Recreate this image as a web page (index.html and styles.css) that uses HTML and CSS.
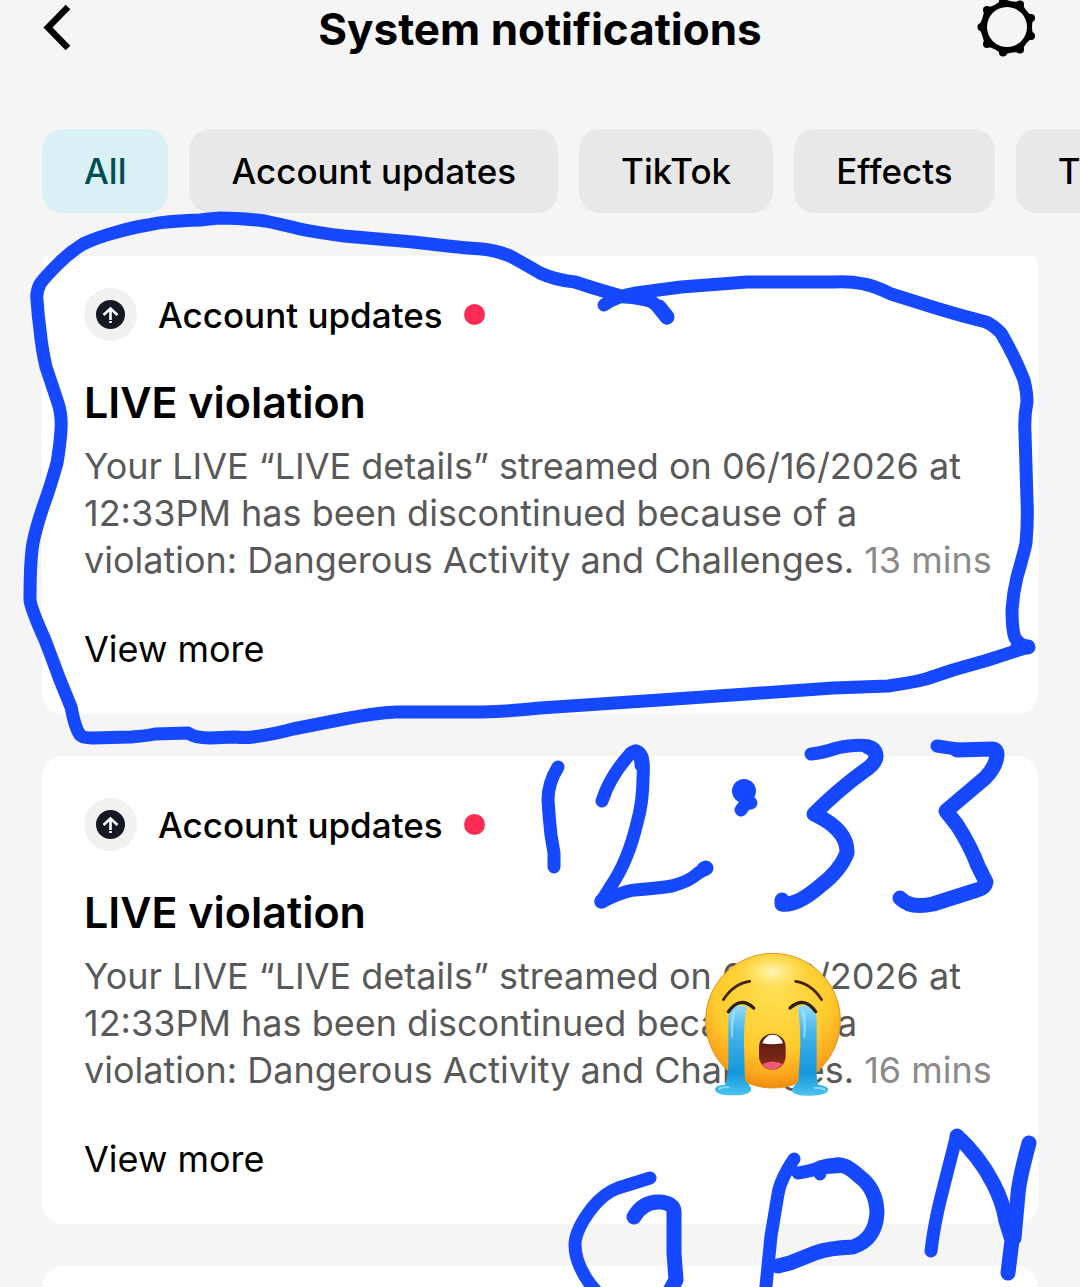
FILE: index.html
```html
<!DOCTYPE html>
<html lang="en">
<head>
    <meta charset="UTF-8">
    <meta name="viewport" content="width=device-width, initial-scale=1">
    <title>System notifications</title>
    <link rel="stylesheet" href="styles.css">
</head>
<body>
    <div class="app">
        <header class="header">
            <button class="icon-btn" aria-label="Back">
                <svg width="32" height="56" viewBox="0 0 32 56"><path d="M25 8 L5 28.500 L25 49" fill="none" stroke="#000" stroke-width="6.500"/></svg>
            </button>
            <h1>System notifications</h1>
            <button class="icon-btn settings" aria-label="Settings">
                <svg width="60" height="60" viewBox="0 0 60 60">
                    <path d="M4 30 Q8 24 10 13 Q21 11 26 4 Q33 8 43 7 Q46 16 54 21 Q51 30 54 39 Q46 44 43 53 Q33 52 26 56 Q21 49 10 47 Q8 36 4 30 Z" fill="#000" stroke="#000" stroke-width="5" stroke-linejoin="round"/>
                    <g fill="#000">
                        <circle cx="4.500" cy="30" r="4"/>
                        <circle cx="10" cy="13" r="4"/>
                        <circle cx="26" cy="4.500" r="4"/>
                        <circle cx="43" cy="7.500" r="4"/>
                        <circle cx="54" cy="21" r="4"/>
                        <circle cx="54" cy="39" r="4"/>
                        <circle cx="43" cy="52.500" r="4"/>
                        <circle cx="26" cy="55.500" r="4"/>
                        <circle cx="10" cy="47" r="4"/>
                    </g>
                    <circle cx="30" cy="30" r="20" fill="#f5f5f5"/>
                </svg>
            </button>
        </header>

        <nav class="chips">
            <button class="chip active">All</button>
            <button class="chip">Account updates</button>
            <button class="chip">TikTok</button>
            <button class="chip">Effects</button>
            <button class="chip">Transactions</button>
        </nav>

        <main class="feed">
            <article class="card">
                <div class="card-top">
                    <span class="avatar">
                        <svg width="53" height="53" viewBox="0 0 53 53"><circle cx="26.500" cy="26.500" r="14.500" fill="#161823"/><path d="M19.500 27 L26.500 20.500 L33.500 27 M26.500 21 V32 M26.500 33 V35" fill="none" stroke="#fff" stroke-width="2.600"/></svg>
                    </span>
                    <span class="category">Account updates</span>
                    <span class="dot"></span>
                </div>
                <h2>LIVE violation</h2>
                <p>Your LIVE “LIVE details” streamed on 06/16/2026 at<br>12:33PM has been discontinued because of a<br>violation: Dangerous Activity and Challenges. <time>13 mins</time></p>
                <a class="more" href="#">View more</a>
            </article>

            <article class="card">
                <div class="card-top">
                    <span class="avatar">
                        <svg width="53" height="53" viewBox="0 0 53 53"><circle cx="26.500" cy="26.500" r="14.500" fill="#161823"/><path d="M19.500 27 L26.500 20.500 L33.500 27 M26.500 21 V32 M26.500 33 V35" fill="none" stroke="#fff" stroke-width="2.600"/></svg>
                    </span>
                    <span class="category">Account updates</span>
                    <span class="dot"></span>
                </div>
                <h2>LIVE violation</h2>
                <p>Your LIVE “LIVE details” streamed on 06/16/2026 at<br>12:33PM has been discontinued because of a<br>violation: Dangerous Activity and Challenges. <time>16 mins</time></p>
                <a class="more" href="#">View more</a>
            </article>

            <article class="card"></article>
        </main>

        <!-- pen marks and sticker over the list -->
        <svg class="drawing" viewBox="0 0 1080 1287" preserveAspectRatio="xMidYMin meet" aria-hidden="true">
            <defs>
                <radialGradient id="face" cx="0.5" cy="0.3" r="0.72">
                    <stop offset="0" stop-color="#ffe052"/>
                    <stop offset="0.6" stop-color="#ffca2c"/>
                    <stop offset="0.85" stop-color="#fba51c"/>
                    <stop offset="1" stop-color="#ee850d"/>
                </radialGradient>
                <radialGradient id="shine">
                    <stop offset="0" stop-color="#fff6bd"/>
                    <stop offset="1" stop-color="#ffe66b" stop-opacity="0"/>
                </radialGradient>
                <linearGradient id="tear" x1="0" y1="0" x2="0" y2="1">
                    <stop offset="0" stop-color="#94daf9"/>
                    <stop offset="0.3" stop-color="#45b4ec"/>
                    <stop offset="0.75" stop-color="#1597dc"/>
                    <stop offset="1" stop-color="#4cc3f0"/>
                </linearGradient>
                <linearGradient id="mouth" x1="0" y1="0" x2="0" y2="1">
                    <stop offset="0" stop-color="#4f1608"/>
                    <stop offset="1" stop-color="#8c301c"/>
                </linearGradient>
            </defs>
            <g class="pen">
                <path d="M667 318 Q657 304 650 301 Q640 298 625 297 Q602 291 575 282 Q555 280 540 273 Q530 267 510 256 Q498 251 482 249 Q465 248 448 246 Q430 244 413 242 L344 236 Q320 233 300 229 Q280 224 265 221 Q240 218 220 218 Q208 219 200 220 Q165 221 148 225 Q130 228 117 232 Q98 237 83 244 Q70 252 58 264 Q44 278 40 284 Q36 292 37 300 Q38 315 40 330 Q42 350 46 367 Q52 385 58 403 Q62 415 61 430 Q60 445 57 463 Q50 488 43 507 Q36 528 33 543 Q30 560 30 600 Q31 609 45 640 Q53 661 60 680 L71 707 Q75 728 80 735 Q83 738 92 738 L131 737 Q145 736 155 734 L188 733 Q195 738 210 738 L234 737 Q246 738 253 737 Q275 734 293 729 L344 719 Q375 713 396 712 L482 712 Q515 711 540 708 L660 700 L747 694 L833 688 L888 686 Q910 683 926 679 L953 670 L988 660 L1028 647 Q1020 645 1015 638 Q1012 630 1012 610 Q1013 593 1017 577 Q1024 553 1026 543 Q1028 520 1027 500 L1025 433 Q1024 417 1027 402 Q1027 392 1024 380 Q1015 357 1001 333 Q993 325 986 322 Q962 316 939 309 L891 294 Q875 286 864 284 Q850 281 833 282 L747 282 L681 287 L636 293 Q614 297 604 305"/>
                <path class="thick" d="M659 307 L667 317 M1018 646 L1028 647"/>
                <path d="M558 767 Q548 783 548 800 Q549 817 551 835 L554 853 L554 867"/>
                <path d="M602 801 Q610 776 630 754 Q638 747 642 757 Q644 766 643 778 Q643 802 637 823 Q628 861 611 886 L601 902 Q624 891 635 890 Q660 888 672 886 Q690 881 697 874 L706 868"/>
                <path class="thick" d="M602 901 L608 897 M636 752 Q642 755 642 765 M704 869 L706 868"/>
                <path d="M746 790 L746 803 L741 810 M746 804 L751 803"/>
                <circle cx="744" cy="791" r="12" stroke="none" fill="#1649ff"/>
                <path class="thick" d="M868 747 Q876 749 876 757 Q875 764 864 771 Q838 790 814 814 Q848 830 847 853 Q840 871 820 886 Q797 906 782 904 L782 900"/>
                <path d="M811 754 Q822 753 837 748 Q856 744 868 746"/>
                <path class="thick" d="M957 750 L992 749 Q997 749 997 755 Q996 767 985 778 L946 811 L957 825 Q970 845 978 866 L986 882 Q985 888 977 890 L933 904 Q910 909 900 898"/>
                <path d="M937 746 L957 749"/>
                <path d="M650 1178 L618 1188 Q604 1193 592 1208 Q575 1230 575 1245 Q575 1263 590 1284 L600 1296"/>
                <path class="thick" d="M634 1217 Q643 1201 660 1202 Q674 1203 674 1212 L674 1253 L676 1280 L667 1296"/>
                <path d="M794 1159 Q780 1180 778 1194 L771 1236 L765 1296"/>
                <path d="M798 1173 Q812 1171 820 1167 Q836 1162 847 1166 L820 1168 L820 1174"/>
                <path class="thick" d="M836 1165 Q845 1163 860 1177 Q876 1189 877 1212 Q876 1239 853 1247 Q828 1248 815 1253 L790 1263 L778 1266"/>
                <path d="M931 1251 Q934 1225 941 1197 L956 1138"/>
                <path class="thick" d="M957 1136 Q979 1156 993 1183 Q1003 1202 1006 1221 L1012 1240 L1008 1273"/>
                <path class="thick" d="M1029 1143 Q1019 1180 1018 1194 L1014 1238"/>
            </g>
            <svg x="680" y="930" width="190" height="190" viewBox="0 0 570 570">
                <circle cx="279" cy="272" r="202" fill="url(#face)" stroke="#dc951d" stroke-width="3"/>
                <ellipse cx="278" cy="125" rx="105" ry="58" fill="url(#shine)"/>
                <g fill="none" stroke="#422309" stroke-width="8" stroke-linecap="round">
                    <path d="M130 209 Q161 161 209 154"/>
                    <path d="M425 209 Q394 161 347 154"/>
                </g>
                <path fill="url(#tear)" d="M151 232 Q176 222 201 230 Q190 280 192 350 L195 452 Q216 468 213 482 Q204 496 160 496 Q105 497 105 476 Q108 465 135 464 Q145 440 145 400 V275 Q145 248 151 232 Z"/>
                <path fill="url(#tear)" d="M353 230 Q378 222 403 232 Q410 250 410 280 V400 Q408 440 414 464 Q446 468 445 480 Q438 497 390 497 Q341 498 336 483 Q337 470 355 455 Q359 400 361 340 Q361 280 353 230 Z"/>
                <g fill="none" stroke="#b7edff" stroke-width="7" stroke-linecap="round" opacity="0.6">
                    <path d="M162 245 Q154 280 156 320 M118 476 Q130 470 145 472"/>
                    <path d="M369 245 Q377 280 373 320 M405 474 Q425 472 433 479"/>
                </g>
                <g fill="none" stroke="#342012" stroke-width="10" stroke-linecap="round">
                    <path d="M145 245 Q180 196 221 234"/>
                    <path d="M407 245 Q373 196 330 234"/>
                </g>
                <rect x="237" y="311" width="80" height="108" rx="40" fill="url(#mouth)"/>
                <path d="M247 340 Q257 313 278 314 Q300 313 309 340 Q277 346 247 340 Z" fill="#fff"/>
                <path d="M247 402 Q278 387 308 402 Q291 420 276 419 Q259 419 247 402 Z" fill="#f0597a"/>
            </svg>
        </svg>
    </div>
</body>
</html>
```
FILE: styles.css
```css
* {
    box-sizing: border-box;
}
body {
    margin: 0;
    background-color: #f5f5f5;
    color: #000;
    font-family: Inter, "Noto Sans", sans-serif;
}
button {
    border: none;
    padding: 0;
    font-family: inherit;
    color: inherit;
    cursor: pointer;
}
.app {
    position: relative;
    display: flex;
    flex-direction: column;
    height: 100vh;
    overflow: hidden;
}
.header {
    display: grid;
    grid-template-columns: 60px 1fr 60px;
    grid-template-rows: 54px;
    align-items: center;
    height: 54px;
    padding: 0 43px;
    flex-shrink: 0;
}
.header h1 {
    margin: 0;
    padding-top: 4px;
    font-size: 44px;
    line-height: 52px;
    font-weight: 700;
    text-align: center;
    white-space: nowrap;
}
.icon-btn {
    display: flex;
    background: none;
}
.settings {
    justify-content: flex-end;
}
.chips {
    display: flex;
    gap: 21px;
    margin-top: 75px;
    padding-left: 42px;
    overflow: hidden;
    flex-shrink: 0;
}
.chip {
    flex-shrink: 0;
    height: 84px;
    padding: 0 42px;
    border-radius: 21px;
    background-color: #e8e8e8;
    font-size: 35px;
    font-weight: 500;
    white-space: nowrap;
}
.chip.active {
    background-color: #d9f0f4;
    color: #004d55;
}
.feed {
    display: flex;
    flex-direction: column;
    flex: 1;
    gap: 42px;
    min-height: 0;
    margin: 43px 42px 0;
    overflow: hidden;
}
.card {
    flex-shrink: 0;
    min-height: 200px;
    padding: 42px 42px 41px;
    border-radius: 21px;
    background: #fff;
}
/* list is scrolled a little */
.card:first-child {
    margin-top: -10px;
}
.card-top {
    display: flex;
    align-items: center;
}
.avatar {
    display: flex;
    width: 53px;
    height: 53px;
    border-radius: 50%;
    background-color: #f1f1f1;
}
.category {
    margin: 0 21px;
    font-size: 35px;
    line-height: 52px;
    font-weight: 500;
}
.dot {
    width: 21px;
    height: 21px;
    border-radius: 50%;
    background-color: #fe2c55;
}
.card h2 {
    margin: 35px 0 15px;
    font-size: 43px;
    line-height: 52px;
    font-weight: 600;
}
.card p {
    margin: 0 0 42px;
    font-size: 36px;
    line-height: 47px;
    color: #595959;
    white-space: nowrap;
}
.card time {
    color: #8a8a8a;
}
.more {
    display: block;
    font-size: 36px;
    line-height: 47px;
    color: #000;
    text-decoration: none;
}
.drawing {
    position: absolute;
    top: 0;
    left: 0;
    width: 100%;
    pointer-events: none;
}
.pen {
    fill: none;
    stroke: #1649ff;
    stroke-width: 13;
    stroke-linecap: round;
    stroke-linejoin: round;
}
.pen .thick {
    stroke-width: 15;
}
```
